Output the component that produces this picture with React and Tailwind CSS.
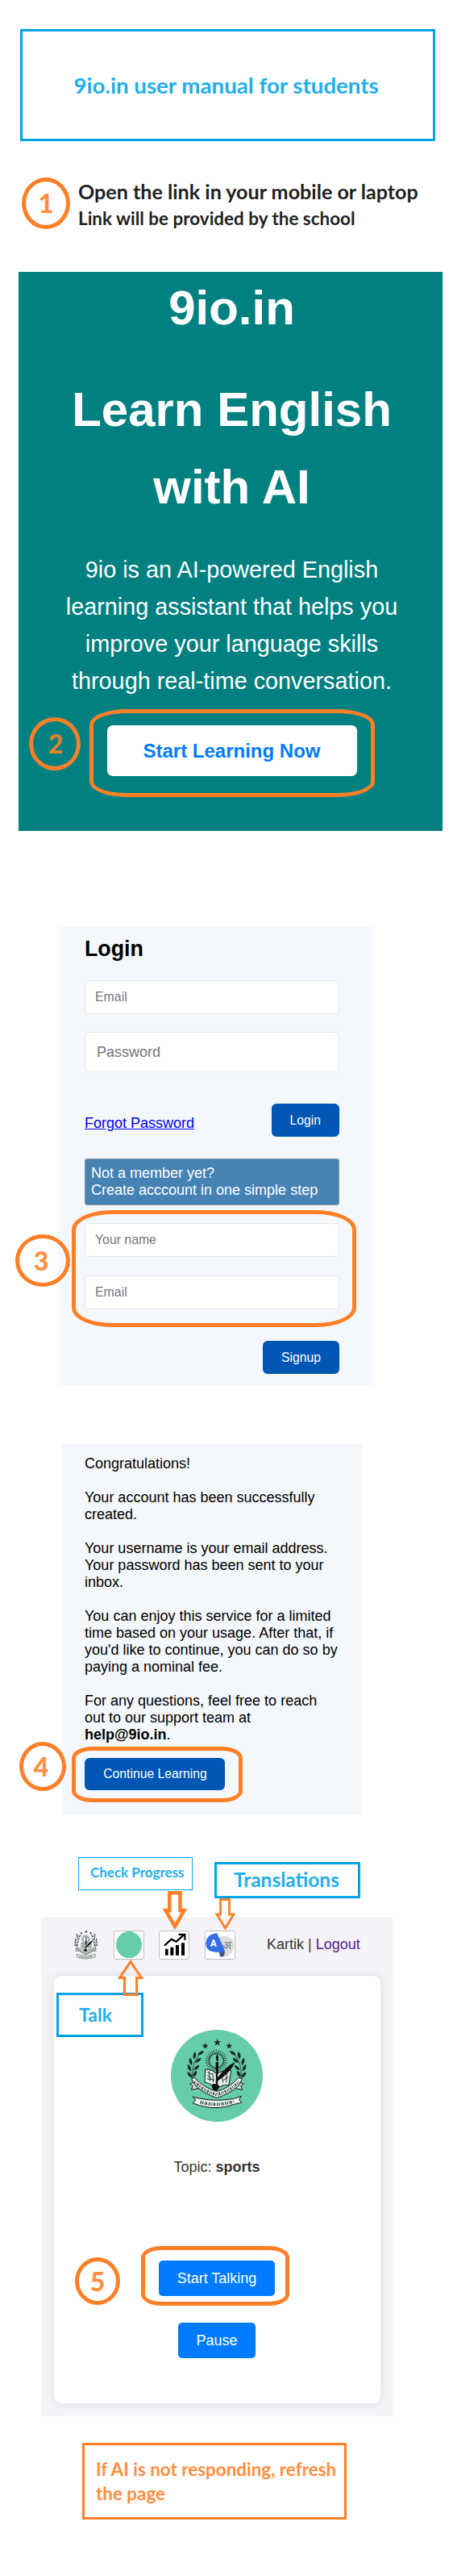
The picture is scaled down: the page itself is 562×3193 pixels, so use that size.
function Step({ n, className }) {
  return (
    <div
      className={`flex items-center justify-center rounded-[50%] border-[5px] border-[#ff7f27] font-[Lato,sans-serif] text-[32px] leading-none font-black ${className}`}
    >
      {n}
    </div>
  );
}

function Outline({ className }) {
  return <div className={`pointer-events-none absolute border-[5px] border-[#ff7f27] ${className}`} />;
}

function Field({ children, className }) {
  return (
    <div className={`flex items-center rounded-[5px] border border-[#e6e6e8] bg-white text-[#757575] ${className}`}>
      {children}
    </div>
  );
}

function BlueButton({ children, className }) {
  return (
    <button className={`flex items-center justify-center rounded-[6px] bg-[#0056b3] text-[17px] text-white ${className}`}>
      <span className="block scale-x-[0.925] whitespace-nowrap">{children}</span>
    </button>
  );
}

const STAR = 'M0 -14 L3.6 -4.6 L13.6 -4.3 L5.7 1.8 L8.4 11.5 L0 6 L-8.4 11.5 L-5.7 1.8 L-13.6 -4.3 L-3.6 -4.6 Z';

const LEAVES = [
  [147, 162, 58],
  [124, 171, 10],
  [137, 189, 50],
  [110, 194, -14],
  [131, 216, 48],
  [105, 217, -24],
  [125, 240, 28],
  [107, 243, -38],
];

const RAYS = Array.from({ length: 28 }, (_, i) => (i * 360) / 28);

function Laurel() {
  return (
    <g>
      <path d="M152 158 Q112 190 116 250" fill="none" stroke="#1d2a26" strokeWidth="2.5" />
      {LEAVES.map(([x, y, r]) => (
        <path
          key={`${x}-${y}`}
          d="M0 -15 Q11 -2 0 14 Q-11 -2 0 -15 Z"
          transform={`translate(${x} ${y}) rotate(${r})`}
          fill="#1d2a26"
        />
      ))}
    </g>
  );
}

function Emblem({ className, filled }) {
  return (
    <svg className={className} viewBox={filled ? '36 75 342 342' : '88 104 236 268'} preserveAspectRatio="none">
      {filled && <circle cx="207" cy="246" r="171" fill="#66cdaa" />}
      <g fill="#1d2a26">
        <path d={STAR} transform="translate(209 122)" />
        <path d={STAR} transform="translate(164 135) scale(.88)" />
        <path d={STAR} transform="translate(253 135) scale(.88)" />
        {!filled && <path d={STAR} transform="translate(124 150) scale(.8)" />}
        {!filled && <path d={STAR} transform="translate(290 150) scale(.8)" />}
      </g>
      <Laurel />
      <g transform="translate(414 0) scale(-1 1)">
        <Laurel />
      </g>
      {RAYS.map((a) => (
        <path key={a} d="M0 -29 V-41" transform={`translate(205 190) rotate(${a})`} stroke="#26332f" strokeWidth="2.4" />
      ))}
      <circle cx="205" cy="190" r="27" fill="none" stroke="#26332f" strokeWidth="3.5" />
      <path d="M208 164 Q218 182 209 194 Q199 182 208 164 Z" fill="#111" />
      <path d="M203 195 H213 V240 H203 Z" fill="#111" />
      <path d="M164 222 Q190 222 207 240 Q225 224 260 226 L252 280 Q222 278 207 296 Q190 276 162 270 Z" fill="#e4eee9" stroke="#111" strokeWidth="3" />
      <path d="M172 233 L190 240 M171 244 L186 256 M178 229 L181 266 M192 236 L193 270 M170 257 L198 262 M226 240 L230 272 M244 234 L242 270 M232 262 L250 250" stroke="#26332f" strokeWidth="3" />
      <path d="M207 238 V294" stroke="#111" strokeWidth="7" />
      <path d="M276 194 Q240 210 207 256 L202 272 L217 260 Q258 232 276 194 Z" fill="#111" />
      <path d="M188 284 Q190 272 200 276 L216 282 Q216 298 204 302 Q190 300 188 284 Z" fill="#111" />
      <path d="M126 268 L107 276 L118 284 L112 298 L142 292 M288 268 L307 276 L296 284 L302 298 L272 292" fill="#dbe9e3" stroke="#111" strokeWidth="3" />
      <path d="M113 257 L124 253 Q160 292 207 304 Q254 292 288 253 L301 257 L290 282 Q252 314 207 328 Q162 314 126 282 Z" fill="#e9f2ee" stroke="#111" strokeWidth="3" />
      <path d="M124 268 Q160 304 207 316 Q254 304 291 268" fill="none" stroke="#26332f" strokeWidth="11" strokeDasharray="3 4 2 4 5 5" />
      <path d="M118 324 L142 330 Q207 344 272 330 L298 322 L290 334 L299 346 L272 352 Q207 376 142 356 L118 348 L128 336 Z" fill="#e9f2ee" stroke="#111" strokeWidth="3" />
      <path d="M146 344 Q207 361 270 341" fill="none" stroke="#26332f" strokeWidth="11" strokeDasharray="4 4 3 4 2 3 5 6" />
    </svg>
  );
}

function ToolButton({ children, className }) {
  return (
    <button
      className={`flex h-[36px] w-[38px] items-center justify-center rounded-[3px] border border-[#bdbdc0] bg-white ${className}`}
    >
      {children}
    </button>
  );
}

function ChartIcon() {
  return (
    <svg className="h-[34px] w-[36px]" viewBox="505 368 108 102">
      <path d="M526 433H537V457H526Z M545 427H557V457H545Z M565 419H577V457H565Z M586 411H598V457H586Z" fill="#000" />
      <path d="M523 421 L549 397 L567 406 L594 382" fill="none" stroke="#000" strokeWidth="6.5" />
      <path d="M576 379.5 H599 V400" fill="none" stroke="#000" strokeWidth="6.5" />
    </svg>
  );
}

function TranslateIcon() {
  return (
    <svg className="h-[34px] w-[36px]" viewBox="677 367 108 102">
      <path d="M728 387 Q735 384 750 384 Q783 388 783 422 Q781 452 752 460 L742 462 Z" fill="#dcdcd9" />
      <path d="M727 442 H749 L746 456 L739 462 L731 460 Z" fill="#3f4f8c" />
      <path d="M715 374 H720 L749 438 L745 444 H714 Q678 441 678 411 Q680 379 715 374 Z" fill="#356fe6" />
      <text x="706" y="423" textAnchor="middle" className="font-[Roboto,sans-serif] text-[36px] font-bold" fill="#fff">
        A
      </text>
      <text x="757" y="432" textAnchor="middle" className="font-['Noto_Sans',sans-serif] text-[42px]" fill="#64808f">
        अ
      </text>
    </svg>
  );
}

export default function App() {
  return (
    <main className="h-[3193px] w-[562px] overflow-hidden bg-white font-['Liberation_Sans',Arial,sans-serif] text-black">
      <header className="mt-9 ml-[25px] flex h-[139px] w-[515px] items-center justify-center border-[3px] border-[#00a2e8] pt-px pr-[3px]">
        <h1 className="scale-x-[1.025] font-[Lato,sans-serif] text-[27px] font-bold whitespace-nowrap text-[#1eaeee]">
          9io.in user manual for students
        </h1>
      </header>

      <section className="mt-[45px] ml-[27px] flex">
        <Step n="1" className="h-16 w-[60px] text-[#ff8e40]" />
        <div className="ml-[10px] w-[440px] font-[Lato,sans-serif] font-bold text-[#1f1f1f]">
          <p className="mt-px origin-left scale-x-[1.004] text-[25px] leading-8 whitespace-nowrap">
            Open the link in your mobile or laptop
          </p>
          <p className="mt-0.5 origin-left scale-x-[1.02] text-[22px] leading-8 whitespace-nowrap">
            Link will be provided by the school
          </p>
        </div>
      </section>

      <section className="relative mt-[50px] ml-[23px] flex h-[693px] w-[526px] flex-col items-center bg-[#008080] pl-[3px] text-center text-white">
        <h2 className="text-[60px] leading-[90px] font-bold">9io.in</h2>
        <h2 className="mt-[33px] text-[60px] leading-[96px] font-bold whitespace-nowrap">
          Learn English
          <br />
          with AI
        </h2>
        <p className="mt-[31px] text-[28.8px] leading-[46px] whitespace-nowrap">
          9io is an AI-powered English
          <br />
          learning assistant that helps you
          <br />
          improve your language skills
          <br />
          through real-time conversation.
        </p>
        <button className="mt-8 flex h-[63px] w-[310px] items-center justify-center rounded-[7px] bg-white text-[24px] font-bold whitespace-nowrap text-[#007bff]">
          Start Learning Now
        </button>
        <Outline className="top-[542px] left-[88px] h-[109px] w-[354px] [border-radius:47px/19px]" />
        <Step n="2" className="absolute top-[552px] left-[13px] h-[66px] w-[64px] pl-0.5 text-[#e2812f]" />
      </section>

      <section className="relative mt-[119px] ml-[72px] h-[568px] w-[391px] bg-[#f4f7fc] pt-[11px] pr-[42px] pl-[33px]">
        <h2 className="origin-left scale-x-[0.957] text-[28px] leading-8 font-bold">Login</h2>
        <Field className="mt-[23px] h-[42px] pl-3 text-[17px]">
          <span className="block origin-left scale-x-[0.935]">Email</span>
        </Field>
        <Field className="mt-[22px] h-[50px] pl-3.5 text-[18px]">Password</Field>
        <div className="mt-[39px] flex h-[41px] items-end justify-between">
          <a className="text-[18px] leading-[33px] text-[#0000ee] underline">Forgot Password</a>
          <BlueButton className="h-[41px] w-[84px]">Login</BlueButton>
        </div>
        <div className="mt-[27px] h-[58px] rounded-[3px] border border-[#8796a3] bg-[#4682b4] pt-[7px] pl-[7px] text-[18px] leading-[21px] whitespace-nowrap text-white">
          Not a member yet?
          <br />
          Create acccount in one simple step
        </div>
        <Field className="mt-[22px] h-[42px] pl-3 text-[17px]">
          <span className="block origin-left scale-x-[0.93] whitespace-nowrap">Your name</span>
        </Field>
        <Field className="mt-[23px] h-[42px] pl-3 text-[17px]">
          <span className="block origin-left scale-x-[0.935]">Email</span>
        </Field>
        <div className="mt-[39px] flex justify-end">
          <BlueButton className="h-[41px] w-[95px]">Signup</BlueButton>
        </div>
        <Outline className="top-[351px] left-[17px] h-[145px] w-[353px] [border-radius:50px/24px]" />
        <Step n="3" className="absolute top-[381px] left-[-53px] h-[65px] w-[68px] pr-1 text-[#ff8e40]" />
      </section>

      <section className="relative mt-[73px] ml-[77px] h-[460px] w-[373px] bg-[#f4f7fc] pt-3.5 pl-7">
        <p className="text-[18px] leading-[21px] whitespace-nowrap">
          Congratulations!
          <br />
          <br />
          Your account has been successfully
          <br />
          created.
          <br />
          <br />
          Your username is your email address.
          <br />
          Your password has been sent to your
          <br />
          inbox.
          <br />
          <br />
          You can enjoy this service for a limited
          <br />
          time based on your usage. After that, if
          <br />
          you'd like to continue, you can do so by
          <br />
          paying a nominal fee.
          <br />
          <br />
          For any questions, feel free to reach
          <br />
          out to our support team at
          <br />
          <b>help@9io.in</b>.
        </p>
        <BlueButton className="mt-[18px] h-10 w-[174px]">Continue Learning</BlueButton>
        <Outline className="top-[375px] left-[12px] h-[69px] w-[212px] [border-radius:26px/14px]" />
        <Step n="4" className="absolute top-[369px] left-[-53px] h-[61px] w-[58px] pr-1 text-[#ff8e40]" />
      </section>

      <div className="mt-[52px] ml-[97px] flex font-[Lato,sans-serif] font-bold whitespace-nowrap text-[#1eaeee]">
        <div className="flex h-[41px] w-[142px] items-center border border-[#00a2e8] pb-1 pl-3.5 text-[17px]">
          Check Progress
        </div>
        <div className="mt-1.5 ml-[27px] flex h-[45px] w-[181px] items-center border-[3px] border-[#00a2e8] pb-0.5 pl-[21px] text-[24px]">
          <span className="block origin-left scale-x-[1.02]">Translations</span>
        </div>
      </div>

      <section className="relative mt-[23px] ml-[51px] h-[619px] w-[436px] bg-[#f4f3f8] pt-4 text-[18px] text-[#333]">
        <div className="flex items-center">
          <Emblem className="ml-10 h-[37px] w-[31px]" />
          <ToolButton className="ml-[19px]">
            <span className="block h-[33px] w-[32px] rounded-[50%] bg-[#66cdaa]" />
          </ToolButton>
          <ToolButton className="ml-[18px]">
            <ChartIcon />
          </ToolButton>
          <ToolButton className="ml-[19px]">
            <TranslateIcon />
          </ToolButton>
          <p className="ml-[39px] whitespace-nowrap">
            Kartik | <a className="text-[#551a8b]">Logout</a>
          </p>
        </div>
        <div className="mx-auto mt-5 flex h-[530px] w-[405px] flex-col items-center rounded-[9px] bg-white shadow-[0_0_12px_rgba(0,0,0,0.1)]">
          <Emblem filled className="mt-[67px] h-[114px] w-[114px]" />
          <p className="mt-[45px] leading-[22px]">
            Topic: <b>sports</b>
          </p>
          <button className="mt-[105px] h-11 w-36 rounded-[5px] bg-[#007bff] text-white">Start Talking</button>
          <button className="mt-[33px] h-11 w-24 rounded-[5px] bg-[#007bff] text-white">Pause</button>
        </div>
        <div className="absolute top-[94px] left-[19px] flex h-[55px] w-[108px] items-center border-[3px] border-[#00a2e8] bg-white pl-[25px] font-[Lato,sans-serif] text-[23px] font-bold text-[#1eaeee]">
          Talk
        </div>
        <svg
          className="pointer-events-none absolute top-[-35px] left-0 h-[140px] w-[436px]"
          viewBox="51 2340 436 140"
          fill="none"
          stroke="#ff7f27"
        >
          <path d="M210.3 2345.2H223.5V2367H228.5L217 2387L205.5 2367H210.3Z" strokeWidth="4.5" />
          <path d="M273.5 2353.5H284.5V2372H290L279.5 2389L269 2372H273.5Z" strokeWidth="2.8" />
          <path d="M162 2430.5L175.5 2450.5H169.5V2471.5H154.5V2450.5H148.5Z" strokeWidth="3" />
        </svg>
        <Outline className="top-[408px] left-[124px] h-[74px] w-[184px] [border-radius:26px/14px]" />
        <Step n="5" className="absolute top-[422px] left-[42px] h-[59px] w-[56px] text-[#ff8e40]" />
      </section>

      <footer className="mt-[33px] ml-[102px] h-[95px] w-[328px] border-[3px] border-[#ff7f27] pt-[15px] pl-3.5 font-[Lato,sans-serif] text-[22px] leading-[30px] font-bold whitespace-nowrap text-[#ff8e40]">
        <p className="w-fit origin-left scale-x-[1.018]">
          If AI is not responding, refresh
          <br />
          the page
        </p>
      </footer>
    </main>
  );
}
